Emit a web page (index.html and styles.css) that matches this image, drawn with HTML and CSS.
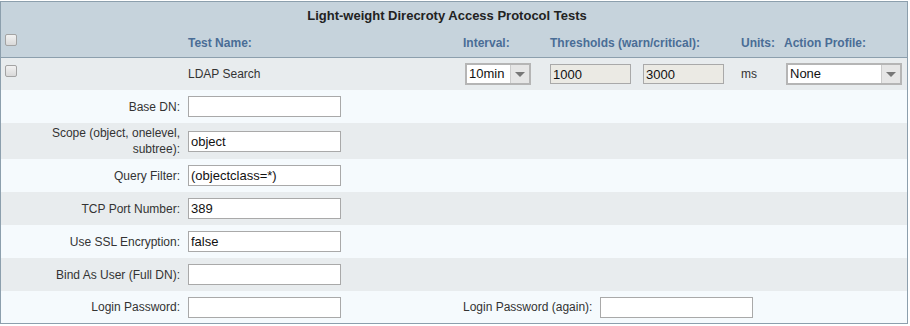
FILE: index.html
```html
<!DOCTYPE html>
<html lang="en">

<head>
    <meta charset="UTF-8">
    <title>LDAP Tests</title>
    <link rel="stylesheet" href="styles.css">
</head>

<body>
    <div class="panel">
        <div class="panel-head">
            <div class="panel-title">Light-weight Direcroty Access Protocol Tests</div>
            <div class="cols head-row">
                <div class="cell-check"><span class="check"></span></div>
                <div>Test Name:</div>
                <div>Interval:</div>
                <div>Thresholds (warn/critical):</div>
                <div>Units:</div>
                <div>Action Profile:</div>
            </div>
        </div>

        <div class="cols test-row">
            <div class="cell-check"><span class="check"></span></div>
            <div>LDAP Search</div>
            <div>
                <div class="select select-interval">
                    <span class="select-value">10min</span>
                    <span class="select-arrow"><i></i></span>
                </div>
            </div>
            <div class="thresholds">
                <input class="field field-off" type="text" value="1000" disabled>
                <input class="field field-off" type="text" value="3000" disabled>
            </div>
            <div>ms</div>
            <div>
                <div class="select select-action">
                    <span class="select-value">None</span>
                    <span class="select-arrow"><i></i></span>
                </div>
            </div>
        </div>

        <!-- test options -->
        <div class="opt-row">
            <label class="opt-label">Base DN:</label>
            <input class="field" type="text" value="">
        </div>
        <div class="opt-row alt tall">
            <label class="opt-label">Scope (object, onelevel,<br>subtree):</label>
            <input class="field" type="text" value="object">
        </div>
        <div class="opt-row">
            <label class="opt-label">Query Filter:</label>
            <input class="field" type="text" value="(objectclass=*)">
        </div>
        <div class="opt-row alt">
            <label class="opt-label">TCP Port Number:</label>
            <input class="field" type="text" value="389">
        </div>
        <div class="opt-row">
            <label class="opt-label">Use SSL Encryption:</label>
            <input class="field" type="text" value="false">
        </div>
        <div class="opt-row alt">
            <label class="opt-label">Bind As User (Full DN):</label>
            <input class="field" type="text" value="">
        </div>
        <div class="opt-row last">
            <label class="opt-label">Login Password:</label>
            <input class="field" type="password" value="">
            <div class="opt-again">
                <label>Login Password (again):</label>
                <input class="field" type="password" value="">
            </div>
        </div>
    </div>
</body>

</html>
```

FILE: styles.css
```css
* {
    box-sizing: border-box;
    margin: 0;
    padding: 0;
}

body {
    font-family: 'Liberation Sans', Arial, Helvetica, sans-serif;
    font-size: 12px;
    color: #333333;
    background-color: #ffffff;
}

/*PANEL*/
.panel {
    width: 908px;
    margin-top: 1px;
    border: 1px solid #8c9fad;
    background-color: #f5fafd;
}

.panel-head {
    background-color: #c6d3dc;
    border-bottom: 1px solid #8c9fad;
}

.panel-title {
    height: 27px;
    line-height: 27px;
    padding-right: 14px;
    text-align: center;
    font-size: 13px;
    font-weight: 700;
    color: #222222;
}

/*COLUMNS*/
.cols {
    display: grid;
    grid-template-columns: 187px 275px 87px 191px 43px 1fr;
    align-items: center;
}

.head-row {
    height: 28px;
    font-weight: 700;
    color: #4a6d96;
}

.head-row .cell-check {
    align-self: start;
    padding-top: 5px;
}

.test-row {
    height: 32px;
    background-color: #e8ecee;
}

.cell-check {
    padding-left: 4px;
    display: flex;
}

.check {
    display: block;
    width: 12px;
    height: 12px;
    border: 1px solid #a3a3a3;
    border-radius: 2px;
    background: linear-gradient(#f2f2f2, #d9d9d9);
}

.test-row .cell-check {
    align-self: start;
    padding-top: 7px;
}

.thresholds {
    display: flex;
    gap: 12px;
}

/*INPUTS*/
.field {
    width: 153px;
    height: 21px;
    border: 1px solid #a9a9a9;
    background-color: #ffffff;
    padding: 0 2px;
    font-family: 'Liberation Sans', Arial, Helvetica, sans-serif;
    font-size: 13px;
    color: #111111;
    outline: none;
}

.field-off {
    width: 81px;
    height: 20px;
    background-color: #ebeae4;
    color: #111111;
}

.select {
    display: flex;
    height: 22px;
    border: 2px solid #b5b5b5;
    background-color: #ffffff;
    margin-left: 2px;
}

.select-interval {
    width: 66px;
}

.select-action {
    width: 116px;
}

.select-value {
    flex: 1;
    padding-left: 2px;
    font-size: 13px;
    line-height: 18px;
    color: #111111;
}

.select-arrow {
    width: 19px;
    background-color: #e6e6e6;
    border-left: 1px solid #cccccc;
    display: flex;
    justify-content: center;
    align-items: center;
}

.select-arrow i {
    width: 0;
    height: 0;
    border-left: 5px solid transparent;
    border-right: 5px solid transparent;
    border-top: 5px solid #777777;
}

/*OPTION ROWS*/
.opt-row {
    display: flex;
    align-items: center;
    height: 33px;
}

.opt-row.alt {
    background-color: #e8ecee;
}

.opt-row.tall {
    height: 36px;
}

.opt-row.last {
    height: 32px;
}

.opt-label {
    width: 187px;
    padding-right: 8px;
    text-align: right;
    line-height: 16px;
}

.opt-again {
    display: flex;
    align-items: center;
    gap: 8px;
    margin-left: 122px;
}
```
